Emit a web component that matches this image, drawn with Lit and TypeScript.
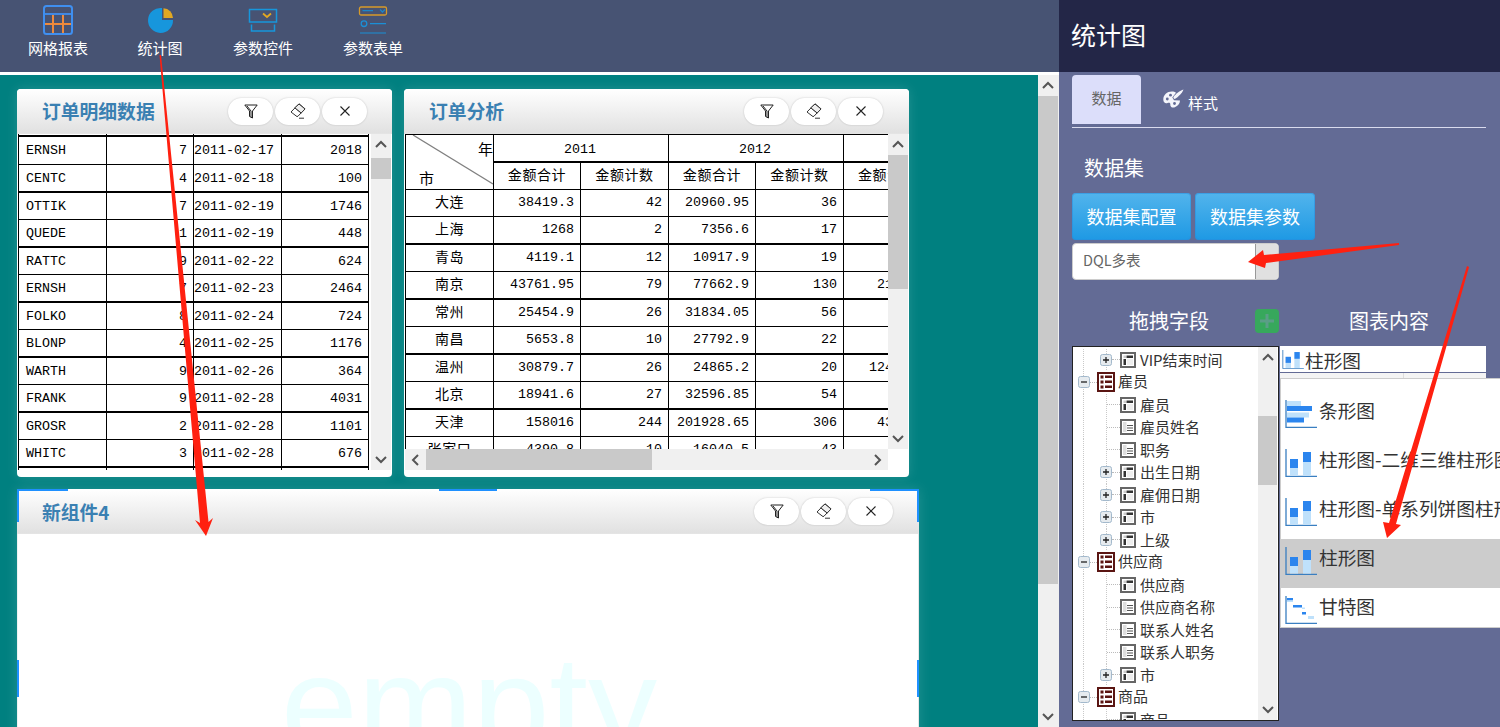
import { LitElement, html, css, svg } from "lit";
import { customElement } from "lit/decorators.js";

const t1 = [
  ["ERNSH","7","2011-02-17","2018"],["CENTC","4","2011-02-18","100"],["OTTIK","7","2011-02-19","1746"],
  ["QUEDE","1","2011-02-19","448"],["RATTC","9","2011-02-22","624"],["ERNSH","7","2011-02-23","2464"],
  ["FOLKO","8","2011-02-24","724"],["BLONP","4","2011-02-25","1176"],["WARTH","9","2011-02-26","364"],
  ["FRANK","9","2011-02-28","4031"],["GROSR","2","2011-02-28","1101"],["WHITC","3","2011-02-28","676"],
];
const t2 = [
  ["大连","38419.3","42","20960.95","36",""],["上海","1268","2","7356.6","17",""],
  ["青岛","4119.1","12","10917.9","19",""],["南京","43761.95","79","77662.9","130","215860"],
  ["常州","25454.9","26","31834.05","56",""],["南昌","5653.8","10","27792.9","22",""],
  ["温州","30879.7","26","24865.2","20","12480.5"],["北京","18941.6","27","32596.85","54",""],
  ["天津","158016","244","201928.65","306","433120"],["张家口","4390.8","10","16040.5","43",""],
];
type Node = [number, string, string, boolean?];
const tree: Node[] = [
  [1,"VIP结束时间","a",true],[0,"雇员","r"],[1,"雇员","a"],[1,"雇员姓名","b"],[1,"职务","b"],
  [1,"出生日期","a",true],[1,"雇佣日期","a",true],[1,"市","a",true],[1,"上级","a",true],
  [0,"供应商","r"],[1,"供应商","a"],[1,"供应商名称","b"],[1,"联系人姓名","b"],[1,"联系人职务","b"],
  [1,"市","a",true],[0,"商品","r"],[1,"商品","a"],
];

const tools = [
  { label: "网格报表", icon: svg`<svg width="32" height="32" viewBox="0 0 32 32"><rect x="2" y="2" width="28" height="28" rx="2.500" fill="none" stroke="#3f8ff0" stroke-width="2"/><path d="M2 10h28" stroke="#3f8ff0" stroke-width="1.800"/><path d="M3 20h26M11 11v18M21 11v18" stroke="#ee8a3c" stroke-width="2"/></svg>` },
  { label: "统计图", icon: svg`<svg width="32" height="32" viewBox="0 0 32 32"><path d="M18 4A12.500 12.500 0 1 0 29 16H18z" fill="#1796dc"/><path d="M19.500 4.200A10 10 0 0 1 29 14H19.500z" fill="#e2a822"/></svg>` },
  { label: "参数控件", icon: svg`<svg width="32" height="32" viewBox="0 0 32 32"><path d="M2.500 18V5.500h27V18z" fill="none" stroke="#1796dc" stroke-width="1.500"/><path d="M4.500 20.500v6.500h23v-6.500" fill="none" stroke="#1796dc" stroke-width="1.500"/><path d="M16 9.500l4 3.500 4-3.500" fill="none" stroke="#e2a822" stroke-width="1.800"/></svg>` },
  { label: "参数表单", icon: svg`<svg width="32" height="32" viewBox="0 0 32 32"><rect x="2.500" y="3" width="27" height="8" rx="1.500" fill="none" stroke="#d79a2a" stroke-width="1.300"/><path d="M5.500 6.700h10.500M23 5.500l2.500 2.500 2.500-2.500" fill="none" stroke="#1b86c9" stroke-width="1.300"/><circle cx="7" cy="19.700" r="2.800" fill="none" stroke="#1b8fd6" stroke-width="1.300"/><path d="M13 19.700h16M3 29h26" stroke="#1b8fd6" stroke-width="1.200"/></svg>` },
];

const funnel = svg`<svg width="14" height="15" viewBox="0 0 14 15" fill="none" stroke="#222" stroke-width="1"><path d="M.8 1h12.400L8.500 7v7L5.500 12.500V7z"/><path d="M3 2l4 5v6"/></svg>`;
const eraser = svg`<svg width="16" height="16" viewBox="0 0 16 16" fill="none" stroke="#333" stroke-width="1"><path d="M9 .8l6 5-7 7.400-1 .4L1 9z" fill="#fff"/><path d="M4.800 4.800l6.400 5.200" /><path d="M9 1l6 5-3.800 4-6.400-5.200z" fill="#eee"/><path d="M9 15.200h5"/></svg>`;
const closeX = svg`<svg width="12" height="12" viewBox="0 0 12 12" stroke="#222" stroke-width="1.100"><path d="M1.500 1.500l9 9M10.500 1.500l-9 9"/></svg>`;
const palette = svg`<svg width="21" height="20" viewBox="0 0 21 20"><path d="M9 2.500C4 2.500 .3 6 .3 10.500c0 3.200 2.300 4.300 4.200 3.500 1.700-.7 3-.3 2.800 1.400-.2 2.500 2.200 4 5 2.600 3-1.400 4.700-3.800 4.700-6.500L11 11.200 9.300 8.500 13 3.700C12 2.900 10.500 2.500 9 2.500z" fill="#f4f5fb"/><path d="M20.500 .5C17 1.500 12.500 5 10.500 8c-.5.800.8 2.300 1.700 1.800C15 8 19 4.500 20.500 .5z" fill="#f4f5fb"/><circle cx="4.300" cy="10" r="1.400" fill="#636b95"/><circle cx="7.500" cy="6.200" r="1.400" fill="#636b95"/><circle cx="11.500" cy="14.500" r="1.400" fill="#636b95"/></svg>`;

function chevron(dir: "up" | "down" | "left" | "right") {
  const d = { up: "M1 7l5-5 5 5", down: "M1 2l5 5 5-5", left: "M7 1L2 6l5 5", right: "M2 1l5 5-5 5" }[dir];
  const size = dir === "up" || dir === "down" ? [12, 9] : [9, 12];
  return svg`<svg width=${size[0]} height=${size[1]} viewBox="0 0 ${size[0]} ${size[1]}"><path d=${d} fill="none" stroke="#555" stroke-width="2"/></svg>`;
}

const axis = svg`<path d="M1 0v27.500h31" fill="none" stroke="#3a7fc1" stroke-width="1.300"/>`;
const colIcon = svg`<svg class="ci" width="32" height="28" viewBox="0 0 32 28">${axis}<rect x="5" y="19" width="8" height="7.500" fill="#bfe1fb"/><rect x="5" y="10" width="8" height="9" fill="#2b85ee"/><rect x="18" y="13" width="8" height="13.500" fill="#bfe1fb"/><rect x="18" y="3" width="8" height="10" fill="#2b85ee"/></svg>`;
const barIcon = svg`<svg class="ci" width="32" height="28" viewBox="0 0 32 28">${axis}<rect x="2" y="1" width="14" height="5" fill="#bfe1fb"/><rect x="2" y="6" width="25" height="5" fill="#2b85ee"/><rect x="2" y="12.500" width="22" height="5" fill="#bfe1fb"/><rect x="2" y="17.500" width="17" height="5" fill="#2b85ee"/></svg>`;
const ganttIcon = svg`<svg class="ci" width="32" height="28" viewBox="0 0 32 28">${axis}<rect x="2" y="2" width="6" height="2.500" fill="#2b85ee"/><rect x="2" y="4.500" width="6" height="1.500" fill="#bfe1fb"/><rect x="8" y="9" width="9" height="2.500" fill="#2b85ee"/><rect x="17" y="11.500" width="3" height="1.500" fill="#bfe1fb"/><rect x="17" y="16" width="4" height="2.500" fill="#2b85ee"/><rect x="23" y="20" width="6" height="3" fill="#bfe1fb"/></svg>`;

const rootIcon = svg`<svg width="18" height="20" viewBox="0 0 18 20"><rect x="1" y="1" width="16" height="18" fill="#fff" stroke="#5a1512" stroke-width="2"/><g fill="#5a1512"><rect x="3.500" y="3.500" width="3" height="3"/><rect x="3.500" y="8.500" width="3" height="3"/><rect x="3.500" y="13.500" width="3" height="3"/><rect x="8" y="3.500" width="7" height="2.500"/><rect x="8" y="8.500" width="7" height="2.500"/><rect x="8" y="13.500" width="7" height="2.500"/></g></svg>`;
const dimIcon = svg`<svg width="16" height="16" viewBox="0 0 16 16"><rect x="1" y="1" width="14" height="14" fill="#fff" stroke="#666" stroke-width="2"/><rect x="6.500" y="3.500" width="6.500" height="2.500" fill="#333"/><rect x="3.500" y="7" width="2.500" height="6" fill="#333"/><rect x="3.500" y="3.500" width="2.500" height="2.500" fill="#ccc"/><rect x="7" y="7" width="6" height="6" fill="#eee"/></svg>`;
const meaIcon = svg`<svg width="16" height="16" viewBox="0 0 16 16"><rect x="1" y="1" width="14" height="14" fill="#fff" stroke="#666" stroke-width="2"/><rect x="3" y="3" width="3.500" height="10" fill="#ddd"/><path d="M7 6.500h6M7 9h6M7 11.500h6" stroke="#555" stroke-width="1.100"/></svg>`;
const expander = (plus: boolean) => svg`<svg class="exp" width="12" height="12" viewBox="0 0 12 12"><rect x=".5" y=".5" width="11" height="11" rx="2" fill="#e6ebef" stroke="#a3b9cc"/><path d="M3 6h6${plus ? "M6 3v6" : ""}" stroke="#222" stroke-width="1.300"/></svg>`;

@customElement("app-root")
export class AppRoot extends LitElement {
  static styles = css`
    :host { display: block; width: 1500px; height: 727px; overflow: hidden; position: relative;
      font-family: "Noto Sans CJK SC", "Liberation Sans", sans-serif; }
    .app { display: grid; grid-template-columns: 1059px 441px; height: 727px; }
    .left { display: flex; flex-direction: column; height: 727px; overflow: hidden; }
    .toolbar { height: 72px; background: #475373; display: grid; grid-template-columns: 102px 102px 104px 116px; padding-left: 7px; flex: none; }
    .tool { display: flex; flex-direction: column; align-items: center; padding-top: 4px; color: #fff; font-size: 15px; }
    .tool svg { display: block; height: 32px; }
    .tool span { line-height: 22px; margin-top: 1px; }
    .gap { height: 3px; background: #fff; flex: none; }
    .work { flex: 1; display: grid; grid-template-columns: 1038px 21px; min-height: 0; }
    .canvas { background: #008080; padding: 14px 0 0 17px; overflow: hidden; }
    .row1 { display: flex; gap: 12px; }
    .panel { background: #fff; border-radius: 4px; box-shadow: 0 0 12px rgba(255,255,255,.14); height: 388px; display: flex; flex-direction: column; position: relative; }
    .p1 { width: 375px; } .p2 { width: 505px; }
    .p3 { width: 902px; height: 300px; margin-top: 12px; border-radius: 0; }
    .phead { height: 45px; flex: none; background: linear-gradient(#ffffff, #e1e1e1); display: flex; align-items: center; justify-content: space-between; padding: 0 26px 0 25px; border-radius: 4px 4px 0 0; border-bottom: 1px solid #e4e4e4; box-sizing: border-box; }
    .p1 .phead { padding-right: 25px; }
    .ptitle { font-size: 18.800px; font-weight: 700; color: #3a80b2; padding-bottom: 2px; }
    .p3 .ptitle { padding-bottom: 0; }
    .pbtns { display: flex; gap: 2px; }
    .pbtn { width: 45px; height: 27px; border-radius: 14px; background: #fff; box-shadow: 0 0 2px rgba(0,0,0,.2); display: flex; align-items: center; justify-content: center; }
    .pbody { flex: 1; display: flex; min-height: 0; padding: 0 1px; }
    .p1 .pbody { padding-bottom: 7px; }
    .p2 .pbody { flex-direction: column; padding-bottom: 7px; }
    .p2 .upper { flex: 1; display: flex; min-height: 0; }

    .vp { overflow: hidden; flex: 1; font-family: "Liberation Mono", "Noto Sans CJK SC", monospace; font-size: 13.330px; color: #000; }
    .t1 { width: 351px; }
    .stub, .tr { display: grid; border-left: 1px solid #000; box-sizing: border-box; }
    .t1 .stub, .t1 .tr { grid-template-columns: 88px 87px 88px 87px; width: 351px; }
    .t2 .tr { grid-template-columns: 88px 87px 88px 87px 88px 88px; width: 527px; }
    .tr { height: 27px; border-bottom: 1px solid #000; }
    .tr.th { height: 28px; border-bottom-width: 2px; }
    .tr.first { height: 28px; }
    .stub { height: 3px; border-bottom: 2px solid #000; }
    .stub.end { height: 2px; border-bottom: 0; }
    .c { border-right: 1px solid #000; display: flex; align-items: center; padding: 0 6px; white-space: nowrap; min-width: 0; overflow: hidden; box-sizing: border-box; }
    .c.r { justify-content: flex-end; }
    .c.date { padding: 0; }
    .c.l { padding-left: 7px; }
    .c.m { justify-content: center; }
    .cjk { font-family: "Noto Sans CJK SC", sans-serif; font-size: 14px; letter-spacing: .6px; }
    .t2 .tr .c.cjk { padding-bottom: 4px; }
    .t2 .tr .c.r { padding-bottom: 2px; }

    .t2 { width: 483px; }
    .thead { display: flex; width: 527px; border-left: 1px solid #000; border-top: 1px solid #000; box-sizing: border-box; }
    .corner { width: 88px; height: 55px; border-right: 1px solid #000; border-bottom: 1px solid #000; box-sizing: border-box; position: relative; flex: none; font-family: "Noto Sans CJK SC", sans-serif; font-size: 15px; }
    .corner svg { position: absolute; inset: 0; }
    .corner .y { position: absolute; right: 0; top: 4px; line-height: 20px; }
    .corner .s { position: absolute; left: 13px; top: 33px; line-height: 20px; }
    .hgroups { flex: 1; }
    .hg { display: grid; grid-template-columns: 175px 175px 88px; height: 28px; border-bottom: 2px solid #000; box-sizing: border-box; }
    .hg .c { padding-top: 2px; padding-right: 8px; }
    .hs { display: grid; grid-template-columns: 87px 88px 87px 88px 88px; height: 27px; border-bottom: 1px solid #000; box-sizing: border-box; }
    .hs .c { padding-bottom: 5px; }
    .hcut { justify-content: flex-start; padding-left: 14px; }

    .vbar { width: 20px; background: #f0f0f0; display: flex; flex-direction: column; flex: none; }
    .arrow { height: 21px; display: flex; align-items: center; justify-content: center; flex: none; }
    .track { flex: 1; min-height: 0; }
    .thumb { background: #c9c9c9; }
    .hbar { height: 21px; background: #f0f0f0; display: flex; flex: none; margin-right: 20px; }
    .hbar .arrow { width: 21px; height: 21px; }
    .hbar .track { display: flex; }
    .hbar .thumb { height: 21px; }

    .pempty { flex: 1; display: flex; justify-content: center; padding-left: 2px; border-left: 1px solid #eef2f2; border-right: 1px solid #e6e6e6; }
    .empty { font-family: "Liberation Sans", sans-serif; font-size: 138px; line-height: 138px; color: #ecffff; margin-top: 101px; }
    .h { position: absolute; background: #1e90ff; }
    .h.t { top: 0; height: 2px; } .h.v { width: 2px; }
    .pagebar { width: 21px; padding-right: 1px; box-sizing: border-box; }

    .side { background: #636b95; color: #fff; height: 727px; overflow: hidden; padding-right: 14px; box-sizing: border-box; }
    .shead { height: 72px; background: #232647; margin-right: -14px; padding-left: 12px; font-size: 25px; line-height: 69px; }
    .sbody { padding-left: 13px; }
    .tabs { display: flex; height: 52px; margin-top: 3px; border-bottom: 1px solid #d9dbee; }
    .tab { width: 69px; height: 49px; background: #dcdefa; color: #666; border-radius: 4px 4px 0 0; font-size: 15px; display: flex; align-items: center; justify-content: center; padding-bottom: 4px; box-sizing: border-box; }
    .tab2 { display: flex; align-items: flex-start; margin-left: 22px; padding-top: 14px; font-size: 15px; gap: 4px; }
    .tab2 span { line-height: 20px; margin-top: 4px; }
    .h2 { font-size: 20px; line-height: 28px; margin: 26px 0 11px 12px; }
    .btns { display: flex; gap: 4px; }
    .btn { width: 119px; height: 47px; border-radius: 4px; background: linear-gradient(#52b4ec, #1e99e4); font-size: 18px; display: flex; align-items: center; justify-content: center; padding-bottom: 2px; box-sizing: border-box; box-shadow: inset 0 0 0 1px rgba(40,140,220,.5); }
    .btn + .btn { width: 120px; }
    .sel { width: 207px; height: 37px; margin-top: 3px; background: #fff; border: 1px solid #ccc; border-radius: 4px; box-sizing: border-box; display: flex; color: #666; font-size: 14.500px; overflow: hidden; }
    .sel .v { flex: 1; padding-left: 10px; line-height: 32px; }
    .sel .b { width: 22px; background: #e0e0e0; border-left: 1px solid #999; }
    .heads { display: grid; grid-template-columns: 183px 24px 70px 80px; margin-top: 25px; height: 24px; font-size: 20px; align-items: center; }
    .heads .a { padding-left: 57px; line-height: 30px; padding-top: 1px; white-space: nowrap; }
    .heads .c2 { line-height: 30px; padding-top: 1px; white-space: nowrap; grid-column: 4; }
    .plus { width: 24px; height: 24px; background: #37a85c; border-radius: 4px; display: flex; align-items: center; justify-content: center; }
    .cols { display: flex; margin-top: 17px; align-items: flex-start; }
    .tree { width: 207px; height: 375px; background: #fff; border: 1px solid #222; box-sizing: border-box; display: flex; color: #333; font-size: 15px; flex: none; }
    .tlist { flex: 1; padding-top: 1.500px; overflow: hidden; }
    .n { height: 22.500px; display: flex; align-items: center; white-space: nowrap; line-height: 22px;
      background-image: linear-gradient(#c9c9c9 50%, transparent 50%); background-size: 1px 2px; background-repeat: repeat-y; background-position: 10px 0; }
    .n.c1 { background-image: linear-gradient(#c9c9c9 50%, transparent 50%), linear-gradient(#c9c9c9 50%, transparent 50%); background-size: 1px 2px, 1px 2px; background-repeat: repeat-y, repeat-y; background-position: 10px 0, 33px 0; }
    .exp { flex: none; background: #fff; }
    .dash { border-top: 1px dotted #bbb; flex: none; height: 0; }
    .n.r .exp { margin-left: 5px; } .n.r .dash { width: 7px; }
    .n.r span { margin-left: 3px; padding-bottom: 2px; }
    .n.c1 .exp { margin-left: 27px; } .n.c1 .dash { width: 8px; }
    .n.c1 .dash.leaf { width: 13px; margin-left: 34px; }
    .n.c1 .txt { margin-left: 4px; }
    .n svg { flex: none; }
    .tbar { width: 19px; margin-right: 1px; }
    .chart { position: relative; width: 206px; margin-left: 1px; flex: none; color: #333; }
    .combo { height: 26px; background: #fff; display: flex; align-items: center; font-size: 18.700px; padding-left: 2px; gap: 1px; white-space: nowrap; }
    .strip { height: 6px; margin-top: 1px; background: linear-gradient(90deg, #f4f4f4 0 123px, #ddd 123px 124px, #f4f4f4 124px); }
    .menu { position: absolute; left: 0; top: 32px; width: 220px; height: 250px; background: #fff; border: 1px solid #ccc; border-right: 0; box-sizing: border-box; padding-top: 13px; overflow: hidden; }
    .mi { height: 49px; display: flex; align-items: flex-start; font-size: 18.700px; padding-left: 4px; white-space: nowrap; gap: 2px; }
    .mi .ci { flex: none; margin-top: 8px; }
    .mi span { line-height: 28px; margin-top: 4px; }
    .mi.sel2 { background: #ccc; }
    .over { position: absolute; left: 0; top: 0; pointer-events: none; }
  `;

  vbar(offset: number, thumb: number) {
    return html`<div class="vbar"><div class="arrow">${chevron("up")}</div><div class="track"><div class="thumb" style="margin-top:${offset}px;height:${thumb}px"></div></div><div class="arrow">${chevron("down")}</div></div>`;
  }

  head(title: string) {
    return html`<div class="phead"><div class="ptitle">${title}</div><div class="pbtns"><div class="pbtn">${funnel}</div><div class="pbtn">${eraser}</div><div class="pbtn">${closeX}</div></div></div>`;
  }

  table1() {
    return html`<div class="vp t1"><div class="stub"><div class="c"></div><div class="c"></div><div class="c"></div><div class="c"></div></div>
      ${t1.map((r, i) => html`<div class="tr ${i % 2 ? "th" : ""} ${i === 0 ? "first" : ""}">
        <div class="c l">${r[0]}</div><div class="c r">${r[1]}</div><div class="c date">${r[2]}</div><div class="c r">${r[3]}</div></div>`)}
      <div class="stub end"><div class="c"></div><div class="c"></div><div class="c"></div><div class="c"></div></div></div>`;
  }

  table2() {
    return html`<div class="vp t2">
      <div class="thead">
        <div class="corner"><svg width="87" height="54"><line x1="7" y1="0" x2="87" y2="49" stroke="#808080" stroke-width="1.300"/></svg><span class="y">年</span><span class="s">市</span></div>
        <div class="hgroups">
          <div class="hg"><div class="c m">2011</div><div class="c m">2012</div><div class="c m"></div></div>
          <div class="hs"><div class="c m cjk">金额合计</div><div class="c m cjk">金额计数</div><div class="c m cjk">金额合计</div><div class="c m cjk">金额计数</div><div class="c cjk hcut">金额合计</div></div>
        </div>
      </div>
      ${t2.map((r, i) => html`<div class="tr ${i % 2 === 0 ? "" : "th"}">
        <div class="c m cjk">${r[0]}</div>${r.slice(1).map(v => html`<div class="c r">${v}</div>`)}</div>`)}
    </div>`;
  }

  render() {
    return html`<div class="app">
      <div class="left">
        <div class="toolbar">${tools.map(t => html`<div class="tool">${t.icon}<span>${t.label}</span></div>`)}</div>
        <div class="gap"></div>
        <div class="work">
          <div class="canvas">
            <div class="row1">
              <div class="panel p1">${this.head("订单明细数据")}<div class="pbody">${this.table1()}${this.vbar(3, 21)}</div></div>
              <div class="panel p2">${this.head("订单分析")}<div class="pbody"><div class="upper">${this.table2()}${this.vbar(0, 134)}</div>
                <div class="hbar"><div class="arrow">${chevron("left")}</div><div class="track"><div class="thumb" style="width:226px"></div></div><div class="arrow">${chevron("right")}</div></div></div></div>
            </div>
            <div class="panel p3">
              ${this.head("新组件4")}
              <div class="pempty"><div class="empty">empty</div></div>
              <div class="h t" style="left:0;width:51px"></div><div class="h t" style="left:422px;width:58px"></div><div class="h t" style="right:0;width:49px"></div>
              <div class="h v" style="left:0;top:0;height:33px"></div><div class="h v" style="right:0;top:0;height:33px"></div>
              <div class="h v" style="left:0;top:171px;height:37px"></div><div class="h v" style="right:0;top:171px;height:37px"></div>
            </div>
          </div>
          <div class="vbar pagebar"><div class="arrow">${chevron("up")}</div><div class="track"><div class="thumb" style="height:488px"></div></div><div class="arrow">${chevron("down")}</div></div>
        </div>
      </div>
      <div class="side">
        <div class="shead">统计图</div>
        <div class="sbody">
          <div class="tabs"><div class="tab">数据</div><div class="tab2">${palette}<span>样式</span></div></div>
          <div class="h2">数据集</div>
          <div class="btns"><div class="btn">数据集配置</div><div class="btn">数据集参数</div></div>
          <div class="sel"><div class="v">DQL多表</div><div class="b"></div></div>
          <div class="heads"><div class="a">拖拽字段</div><div class="plus"><svg width="16" height="16"><path d="M8 1v14M1 8h14" stroke="#5b9e86" stroke-width="3"/></svg></div><div class="c2">图表内容</div></div>
          <div class="cols">
            <div class="tree">
              <div class="tlist">${tree.map(([lv, name, kind, plus]) => lv === 0
                ? html`<div class="n r">${expander(false)}<i class="dash"></i>${rootIcon}<span>${name}</span></div>`
                : html`<div class="n c1">${plus ? html`${expander(true)}<i class="dash"></i>` : html`<i class="dash leaf"></i>`}${kind === "a" ? dimIcon : meaIcon}<span class="txt">${name}</span></div>`)}</div>
              <div class="vbar tbar"><div class="arrow">${chevron("up")}</div><div class="track"><div class="thumb" style="margin-top:48px;height:69px"></div></div><div class="arrow">${chevron("down")}</div></div>
            </div>
            <div class="chart">
              <div class="combo"><svg width="22" height="19" viewBox="0 0 32 28">${axis}<rect x="5" y="19" width="8" height="7.500" fill="#bfe1fb"/><rect x="5" y="10" width="8" height="9" fill="#2b85ee"/><rect x="18" y="13" width="8" height="13.500" fill="#bfe1fb"/><rect x="18" y="3" width="8" height="10" fill="#2b85ee"/></svg><span>柱形图</span></div>
              <div class="strip"></div>
              <div class="menu">
                <div class="mi">${barIcon}<span>条形图</span></div>
                <div class="mi">${colIcon}<span>柱形图-二维三维柱形图</span></div>
                <div class="mi">${colIcon}<span>柱形图-单系列饼图柱形图</span></div>
                <div class="mi sel2">${colIcon}<span>柱形图</span></div>
                <div class="mi">${ganttIcon}<span>甘特图</span></div>
              </div>
            </div>
          </div>
        </div>
      </div>
    </div>
    <svg class="over" width="1500" height="727" fill="#ff2010">
      <polygon points="159.500,55 161,55 208.500,522 213,518 206,536 195,520 200,523"/>
      <polygon points="1399,243 1264,255 1263,250 1248,262 1265,268 1266,263 1399,245"/>
      <polygon points="1467,266 1469,267 1396,524 1401,525 1387,538 1383,522 1389,523"/>
    </svg>`;
  }
}
